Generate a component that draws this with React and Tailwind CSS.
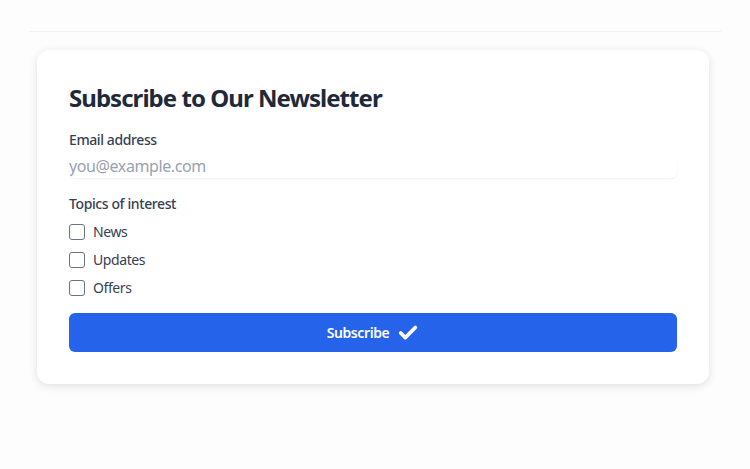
import { Check } from "lucide-react";

const topics = ["News", "Updates", "Offers"];

export default function App() {
  return (
    <div
      className="min-h-screen bg-[#fdfdfd] px-[29px] pt-[31px] tracking-[-0.025em]"
      style={{ fontFamily: '"Noto Sans", "Open Sans", sans-serif' }}
    >
      <div className="border-t border-[#f1f1f1]" />
      <div className="ml-2 mr-3 mt-[18px] rounded-xl bg-white p-8 shadow-[0_2px_8px_rgba(0,0,0,0.12)]">
        <h1 className="text-2xl font-bold tracking-[-0.04em] text-gray-800">Subscribe to Our Newsletter</h1>

        <label className="mt-4 block text-sm font-medium text-gray-700">Email address</label>
        <input
          type="email"
          placeholder="you@example.com"
          className="mt-1 block w-full rounded-md border-0 bg-white p-0 text-base text-gray-800 shadow-[0_1px_2px_rgba(0,0,0,0.06)] outline-none placeholder:text-gray-400"
        />

        <div className="mt-4 text-sm font-medium text-gray-700">Topics of interest</div>
        <div className="mt-2 flex flex-col gap-2">
          {topics.map((t) => (
            <label key={t} className="flex items-center gap-2 text-sm text-gray-700">
              <span className="h-4 w-4 rounded-[3px] border border-gray-500 bg-white" />
              {t}
            </label>
          ))}
        </div>

        <button className="mt-[15px] flex h-[39px] w-full items-center justify-center gap-2 rounded-md bg-[#2563eb] text-sm font-semibold text-white">
          Subscribe
          <Check size={22} strokeWidth={4} />
        </button>
      </div>
    </div>
  );
}
